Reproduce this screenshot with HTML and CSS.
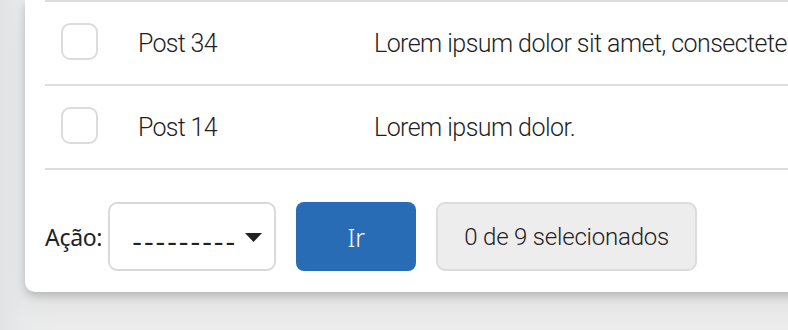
FILE: index.html
```html
<!DOCTYPE html>
<html lang="pt">
<head>
<meta charset="utf-8">
<link rel="stylesheet" href="styles.css">
</head>
<body>
<div class="card">
  <div class="rows">
    <div class="row">
      <span class="check"></span>
      <span class="title">Post 34</span>
      <span class="desc">Lorem ipsum dolor sit amet, consectete</span>
    </div>
    <div class="row">
      <span class="check"></span>
      <span class="title">Post 14</span>
      <span class="desc">Lorem ipsum dolor.</span>
    </div>
  </div>
  <div class="actions">
    <label class="label">Ação:</label>
    <div class="select">
      <span class="dashes">---------</span>
      <svg class="caret" width="17" height="9" viewBox="0 0 17 9"><path d="M0 0H17L8.5 9Z" fill="#222"/></svg>
    </div>
    <button class="go">Ir</button>
    <div class="counter">0 de 9 selecionados</div>
  </div>
</div>
</body>
</html>
```
FILE: styles.css
```css
html, body {
  margin: 0;
  height: 100%;
  overflow: hidden;
}
body {
  background: linear-gradient(90deg, #e2e3e5 0px, #e9eaeb 25px, #ececec 60px);
  padding-left: 25px;
  font-family: "Roboto", "Liberation Sans", sans-serif;
  color: #222;
}
.card {
  width: 820px;
  background: #fff;
  border-bottom-left-radius: 10px;
  padding: 0 0 21px 20px;
  box-shadow: 0 4px 8px rgba(0,0,0,0.18), 0 12px 28px rgba(0,0,0,0.06);
}
.rows {
  border-top: 2px solid #dddddd;
}
.row {
  height: 82px;
  border-bottom: 2px solid #dddddd;
  display: flex;
  align-items: center;
  white-space: nowrap;
  overflow: hidden;
}
.check {
  flex: none;
  width: 33px;
  height: 33px;
  border: 2px solid #dcdcdc;
  border-radius: 9px;
  margin-left: 16px;
  margin-top: -4px;
  box-sizing: content-box;
}
.title {
  width: 236px;
  margin-left: 40px;
  flex: none;
  font-size: 25px;
  font-weight: 300;
  letter-spacing: -0.7px;
  color: #1f1f1f;
}
.desc {
  font-size: 25px;
  font-weight: 300;
  letter-spacing: -0.55px;
  color: #1f1f1f;
}
.actions {
  display: flex;
  align-items: center;
  padding-top: 32px;
}
.label {
  font-family: "Noto Sans", "Open Sans", sans-serif;
  font-size: 23px;
  letter-spacing: -0.3px;
  color: #222;
  margin-right: 6px;
}
.select {
  box-sizing: border-box;
  width: 168px;
  height: 69px;
  border: 2px solid #d9d9d9;
  border-radius: 9px;
  display: flex;
  align-items: center;
  padding-left: 22px;
  gap: 8px;
}
.dashes {
  font-family: "Open Sans", "Noto Sans", sans-serif;
  font-size: 30px;
  line-height: 30px;
  letter-spacing: 2px;
  color: #222;
  margin-top: 8px;
}
.caret {
  display: block;
  margin-top: 2px;
}
.go {
  box-sizing: border-box;
  width: 120px;
  height: 69px;
  margin-left: 20px;
  border: none;
  border-radius: 8px;
  background: #286cb5;
  color: #fff;
  font-family: "Noto Sans", "Open Sans", sans-serif;
  font-weight: 300;
  font-size: 25px;
  padding: 0;
}
.counter {
  box-sizing: border-box;
  width: 261px;
  height: 69px;
  margin-left: 20px;
  border: 2px solid #dcdcdc;
  border-radius: 9px;
  background: #ededed;
  display: flex;
  align-items: center;
  justify-content: center;
  font-size: 24px;
  font-weight: 300;
  letter-spacing: -0.2px;
  color: #222;
}
```
